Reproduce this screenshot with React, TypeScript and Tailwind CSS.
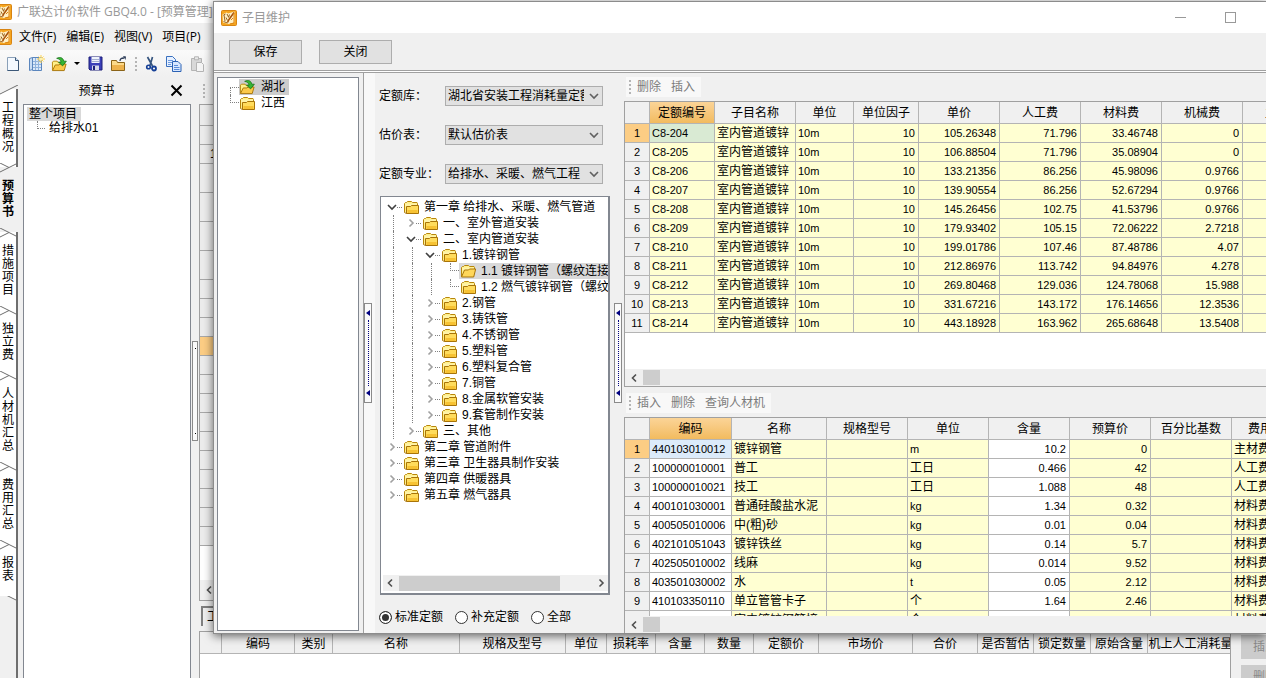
import React, { useState } from "react";
import clsx from "clsx";

type Column = { title: string; width: number; align?: "right"; white?: boolean };

type TreeNode = { depth: number; label: string; state: "open" | "closed" | "leaf" };

const quotaColumns: Column[] = [
  { title: "定额编号", width: 65 },
  { title: "子目名称", width: 81 },
  { title: "单位", width: 58 },
  { title: "单位因子", width: 65, align: "right" },
  { title: "单价", width: 81, align: "right" },
  { title: "人工费", width: 81, align: "right" },
  { title: "材料费", width: 81, align: "right" },
  { title: "机械费", width: 81, align: "right" },
  { title: "主材费", width: 81, align: "right" },
];

const quotaRows = [
  ["C8-204", "105.26348", "71.796", "33.46748", "0"],
  ["C8-205", "106.88504", "71.796", "35.08904", "0"],
  ["C8-206", "133.21356", "86.256", "45.98096", "0.9766"],
  ["C8-207", "139.90554", "86.256", "52.67294", "0.9766"],
  ["C8-208", "145.26456", "102.75", "41.53796", "0.9766"],
  ["C8-209", "179.93402", "105.15", "72.06222", "2.7218"],
  ["C8-210", "199.01786", "107.46", "87.48786", "4.07"],
  ["C8-211", "212.86976", "113.742", "94.84976", "4.278"],
  ["C8-212", "269.80468", "129.036", "124.78068", "15.988"],
  ["C8-213", "331.67216", "143.172", "176.14656", "12.3536"],
  ["C8-214", "443.18928", "163.962", "265.68648", "13.5408"],
].map(([code, ...prices]) => [code, "室内管道镀锌", "10m", "10", ...prices, ""]);

const materialColumns: Column[] = [
  { title: "编码", width: 82, white: true },
  { title: "名称", width: 95 },
  { title: "规格型号", width: 81 },
  { title: "单位", width: 81 },
  { title: "含量", width: 81, align: "right", white: true },
  { title: "预算价", width: 81, align: "right" },
  { title: "百分比基数", width: 81, align: "right" },
  { title: "费用类别", width: 81 },
];

const materialRows = [
  ["440103010012", "镀锌钢管", "", "m", "10.2", "0", "", "主材费"],
  ["100000010001", "普工", "", "工日", "0.466", "42", "", "人工费"],
  ["100000010021", "技工", "", "工日", "1.088", "48", "", "人工费"],
  ["400101030001", "普通硅酸盐水泥", "", "kg", "1.34", "0.32", "", "材料费"],
  ["400505010006", "中(粗)砂", "", "kg", "0.01", "0.04", "", "材料费"],
  ["402101051043", "镀锌铁丝", "", "kg", "0.14", "5.7", "", "材料费"],
  ["402505010002", "线麻", "", "kg", "0.014", "9.52", "", "材料费"],
  ["403501030002", "水", "", "t", "0.05", "2.12", "", "材料费"],
  ["410103350110", "单立管管卡子", "", "个", "1.64", "2.46", "", "材料费"],
  ["", "室内镀锌钢管接", "", "个", "", "", "", "材料费"],
];

const chapters: TreeNode[] = [
  { depth: 0, label: "第一章 给排水、采暖、燃气管道", state: "open" },
  { depth: 1, label: "一、室外管道安装", state: "closed" },
  { depth: 1, label: "二、室内管道安装", state: "open" },
  { depth: 2, label: "1.镀锌钢管", state: "open" },
  { depth: 3, label: "1.1 镀锌钢管（螺纹连接）", state: "leaf" },
  { depth: 3, label: "1.2 燃气镀锌钢管（螺纹连接）", state: "leaf" },
  { depth: 2, label: "2.钢管", state: "closed" },
  { depth: 2, label: "3.铸铁管", state: "closed" },
  { depth: 2, label: "4.不锈钢管", state: "closed" },
  { depth: 2, label: "5.塑料管", state: "closed" },
  { depth: 2, label: "6.塑料复合管", state: "closed" },
  { depth: 2, label: "7.铜管", state: "closed" },
  { depth: 2, label: "8.金属软管安装", state: "closed" },
  { depth: 2, label: "9.套管制作安装", state: "closed" },
  { depth: 1, label: "三、其他", state: "closed" },
  { depth: 0, label: "第二章 管道附件", state: "closed" },
  { depth: 0, label: "第三章 卫生器具制作安装", state: "closed" },
  { depth: 0, label: "第四章 供暖器具", state: "closed" },
  { depth: 0, label: "第五章 燃气器具", state: "closed" },
];

const sideTabs = ["工程概况", "预算书", "措施项目", "独立费", "人材机汇总", "费用汇总", "报表"];

const detailColumns = [
  { title: "", width: 22 },
  { title: "编码", width: 73 },
  { title: "类别", width: 38 },
  { title: "名称", width: 127 },
  { title: "规格及型号", width: 106 },
  { title: "单位", width: 41 },
  { title: "损耗率", width: 49 },
  { title: "含量", width: 49 },
  { title: "数量", width: 49 },
  { title: "定额价", width: 65 },
  { title: "市场价", width: 94 },
  { title: "合价", width: 65 },
  { title: "是否暂估", width: 56 },
  { title: "锁定数量", width: 57 },
  { title: "原始含量", width: 57 },
  { title: "机上人工消耗量", width: 86 },
];

const gridRowHeights = [21, 19, 19, 29, 29, 29, 29, 19, 19, 19, 19, 19, 19, 19, 19, 19, 19, 19, 19, 19, 19];

const AppIcon = () => (
  <svg width="16" height="16" viewBox="0 0 16 16" className="shrink-0">
    <rect x="0.5" y="0.5" width="15" height="15" rx="1" fill="#f5a51f" stroke="#d88412" />
    <path d="M1.500 4.500l4-2 1.500 1 6.500-2v11l-6 1.500-5.500-1.500z" fill="#fff0c4" />
    <path d="M2.500 5l2-1M3 5l1 6M2.500 11.500l4 1.500M6 4l1.500 3M5 7.500l1.500 3M8.500 4.500l-1 3" stroke="#8f5410" strokeWidth="0.9" fill="none" />
    <path d="M13 2.500L8 9.500l-1.500 3" stroke="#a8520a" strokeWidth="1.500" fill="none" />
    <path d="M13 3v10l-4 1M10 10l2-2" stroke="#dd8413" fill="none" />
  </svg>
);

const Folder = ({ open = false }: { open?: boolean }) => (
  <svg width="16" height="16" viewBox="0 0 16 16" className="shrink-0">
    <path d="M1.500 13.500v-9l1-1h1l1-1h4l1 1h4.500l.5 1v2" fill="#fff08a" stroke="#b8860b" />
    <path d="M2 4.500h12v3H2z" fill="#fff4a8" />
    {open ? (
      <path d="M1.500 14L4.500 7h4l1-1h6.200l-2 8z" fill="#ffd75a" stroke="#a87408" />
    ) : (
      <>
        <path d="M3.500 14.500v-7h4l1-1h7v8z" fill="#ffdc5c" stroke="#a87408" />
        <path d="M4.500 11h10v3h-10z" fill="#f7c233" />
        <path d="M1.500 13.500l2 1" stroke="#a87408" />
      </>
    )}
  </svg>
);

const OpenFolder = () => (
  <svg width="17" height="16" viewBox="0 0 18 17" className="shrink-0">
    <path d="M1.500 15V6.500l1-1h4l1 1.500h6v3" fill="#fff08a" stroke="#b8860b" />
    <path d="M1.500 15.500l3-6h4l1-1h6.500l-2 7z" fill="#fbc94a" stroke="#a87408" />
    <path d="M6 2.500c4-2 7-.5 7.500 3h2.800L12.300 10.500 8 6.500h2.700C10 4 8.500 3 6 2.500z" fill="#35b535" stroke="#167016" strokeWidth="0.8" />
  </svg>
);

const NewPage = () => (
  <svg width="14" height="16" viewBox="0 0 14 16">
    <path d="M1.500 1.500h8l3 3v10h-11z" fill="#f4f9ff" stroke="#8aa0b8" />
    <path d="M12.500 4.500v10h-11" stroke="#3c5878" fill="none" />
    <path d="M9.500 1.500v3h3" fill="#cfe0f2" stroke="#3c5878" />
  </svg>
);

const NewSheet = () => (
  <svg width="17" height="17" viewBox="0 0 17 17">
    <path d="M1.500 3.500l3-1v12l-3 1z" fill="#c9ddf5" stroke="#5b86bd" />
    <path d="M4.500 2.500h9v13h-9z" fill="#dbe8f8" stroke="#5b86bd" />
    <path d="M7.500 3v12M10.500 3v12M5 6.500h8M5 9.500h8M5 12.500h8" stroke="#8fb2dd" />
    <path d="M13 0v8M9 4h8M10.500 1.500l5 5M15.500 1.500l-5 5" stroke="#ffd34d" />
    <circle cx="13" cy="4" r="1.500" fill="#fff3b0" />
  </svg>
);

const SaveIcon = () => (
  <svg width="15" height="15" viewBox="0 0 15 15">
    <path d="M1 1h13v13H2l-1-1z" fill="#3a3fb8" stroke="#1c1f78" />
    <path d="M3.500 1h8v6h-8z" fill="#eef2fb" />
    <path d="M4 3.500h7M4 5.500h7" stroke="#a4aed0" />
    <path d="M4 9.500h7V14H4z" fill="#d5d9ea" />
    <path d="M5 10h2v4H5z" fill="#1c1f78" />
  </svg>
);

const CloseProject = () => (
  <svg width="17" height="16" viewBox="0 0 17 16">
    <path d="M1.500 14.500v-10h5l1 2h7v8z" fill="#fbd98a" stroke="#8a6318" />
    <path d="M2 9h12v5H2z" fill="#edb24d" />
    <path d="M10 5c0-2 1-3 4-3" stroke="#2c3c58" fill="none" strokeWidth="1.300" />
    <path d="M13 0l3 .5-.5 3.500z" fill="#2c3c58" />
  </svg>
);

const CutIcon = () => (
  <svg width="13" height="16" viewBox="0 0 13 16">
    <path d="M2.500 1l5 9M7.500 1L5 9.500" stroke="#36557f" strokeWidth="1.700" />
    <circle cx="3.500" cy="11" r="1.800" fill="none" stroke="#153f96" strokeWidth="1.600" />
    <circle cx="9" cy="12.500" r="2" fill="none" stroke="#153f96" strokeWidth="1.800" />
  </svg>
);

const CopyIcon = () => (
  <svg width="16" height="16" viewBox="0 0 16 16">
    <path d="M.5.5h6l3 3v7h-9z" fill="#e6f0ff" stroke="#3970bf" />
    <path d="M2 4.500h5M2 6.500h5M2 8.500h3" stroke="#6d9be0" />
    <path d="M6.500 5.500h5.500l3 3v7h-8.500z" fill="#d7e7ff" stroke="#2c62b4" />
    <path d="M8 9.500h4M8 11.500h5.500M8 13.500h5.500" stroke="#5a8cd8" />
  </svg>
);

const PasteIcon = () => (
  <svg width="15" height="16" viewBox="0 0 15 16">
    <path d="M1.500 2.500h10v12h-10z" fill="#d8d8d8" stroke="#b4b4b4" />
    <path d="M4.500.8h4v3h-4z" fill="#e8e8e8" stroke="#b4b4b4" />
    <path d="M6.500 6.500h5l2 2v7h-7z" fill="#f4f4f4" stroke="#b4b4b4" />
  </svg>
);

const Chevron = ({ dir, className }: { dir: "left" | "right" | "down"; className?: string }) => (
  <svg width="10" height="10" viewBox="0 0 10 10" fill="none" stroke="currentColor" strokeWidth="1.600" className={clsx("shrink-0", className)}>
    {dir === "left" && <path d="M7 1.500L3.500 5 7 8.500" />}
    {dir === "right" && <path d="M3.500 1.500L7 5 3.500 8.500" />}
    {dir === "down" && <path d="M1 3l4 4 4-4" />}
  </svg>
);

const Grip = () => <span className="h-3.5 w-0 shrink-0 border-l-2 border-dotted border-[#b4b4b4]" />;

const SplitHandle = () => (
  <div className="flex h-[100px] w-2 flex-col items-center justify-between border border-[#8a8a8a] bg-[#fafafa] py-1.5">
    <span className="border-y-[3px] border-r-4 border-y-transparent border-r-[#000080]" />
    <span className="my-1 w-0 flex-1 border-l border-dotted border-[#000080]" />
    <span className="border-y-[3px] border-r-4 border-y-transparent border-r-[#000080]" />
  </div>
);

const Guide = () => <span className="ml-2.5 w-[9px] shrink-0 self-stretch border-l border-dotted border-[#808080]" />;

const Elbow = () => (
  <span className="ml-2.5 flex w-[9px] shrink-0 flex-col self-stretch">
    <span className="h-2 border-b border-l border-dotted border-[#808080]" />
  </span>
);

const GridTable = ({ columns, rows }: { columns: Column[]; rows: string[][] }) => (
  <table className="w-px table-fixed border-separate border-spacing-0">
    <colgroup>
      <col className="w-[25px]" />
      {columns.map((c) => (
        <col key={c.title} style={{ width: c.width }} />
      ))}
    </colgroup>
    <thead>
      <tr>
        <th className="border-r border-b border-[#b4b4b4] bg-[#f0f0f0]" />
        {columns.map((c, i) => (
          <th
            key={c.title}
            className={clsx(
              "h-[22px] overflow-hidden border-r border-b border-[#b4b4b4] p-0 pt-0.5 font-normal leading-[19px] whitespace-nowrap",
              i === 0 ? "bg-linear-to-b from-[#fbd497] to-[#f2bb5e]" : "bg-[#f0f0f0]"
            )}
          >
            {c.title}
          </th>
        ))}
      </tr>
    </thead>
    <tbody>
      {rows.map((row, r) => (
        <tr key={r}>
          <th
            className={clsx(
              "h-[19px] border-r border-b border-[#b4b4b4] p-0 text-[11px] font-normal leading-[18px]",
              r === 0 ? "bg-[#fccd84]" : "bg-[#f0f0f0]"
            )}
          >
            {row[0] && r + 1}
          </th>
          {row.map((cell, i) => (
            <td
              key={i}
              className={clsx(
                "h-[19px] overflow-hidden border-r border-b border-[#b4b4b4] py-0 pr-[3px] pl-0.5 leading-[18px] whitespace-nowrap",
                columns[i].align === "right" && "text-right",
                /^[\w.-]*$/.test(cell) ? "text-[11px]" : "text-xs",
                r === 0 && i === 0
                  ? columns[i].white
                    ? "bg-[#dcebfa]"
                    : "bg-[#d9ead3]"
                  : columns[i].white
                  ? "bg-white"
                  : "bg-[#ffffd2]"
              )}
            >
              {cell}
            </td>
          ))}
        </tr>
      ))}
    </tbody>
  </table>
);

const SmallScroll = () => (
  <div className="flex h-[17px] shrink-0 items-center bg-[#f0f0f0] pl-1 text-[#505050]">
    <Chevron dir="left" />
    <span className="ml-1 h-[15px] w-[17px] bg-[#cdcdcd]" />
  </div>
);

const PanelToolbar = ({ actions }: { actions: string[] }) => (
  <div className="flex h-5 w-fit items-center gap-2.5 bg-[#f8f8f8] pr-1.5 pl-[3px] text-[#7c7c7c]">
    <Grip />
    {actions.map((a, i) => (
      <button key={a} className={clsx("leading-5", i === 0 && "-ml-1")}>
        {a}
      </button>
    ))}
  </div>
);

const SelectRow = ({ id, label, options }: { id: string; label: string; options: string[] }) => (
  <div className="flex h-5 items-center">
    <label htmlFor={id} className="w-[66px]">
      {label}
    </label>
    <div className="relative w-[158px]">
      <select id={id} className="block h-5 w-full appearance-none border border-[#adadad] bg-[#e1e1e1] pr-[18px] pl-0.5 leading-[18px]">
        {options.map((o) => (
          <option key={o}>{o}</option>
        ))}
      </select>
      <Chevron dir="down" className="pointer-events-none absolute top-[5px] right-1 text-[#606060]" />
    </div>
  </div>
);

const MaintenanceDialog = () => {
  const [kind, setKind] = useState("标准定额");
  const [selected, setSelected] = useState("1.1 镀锌钢管（螺纹连接）");

  return (
    <section className="absolute top-px right-0 bottom-11 left-[213px] flex flex-col border border-r-0 border-[#8c8c8c] bg-[#f0f0f0] shadow-[0_2px_9px_rgba(0,0,0,0.6)]">
      <header className="flex h-[31px] shrink-0 items-center gap-[5px] bg-white pr-[30px] pl-[7px] text-[#999999]">
        <AppIcon />
        <h1 className="flex-1">子目维护</h1>
        <button aria-label="最小化" className="mr-[34px] h-px w-[11px] bg-[#999999]" />
        <button aria-label="最大化" className="size-[11px] border border-[#999999]" />
      </header>
      <div className="flex h-[37px] shrink-0 items-center gap-[17px] pl-[15px]">
        <button className="h-6 w-[73px] border border-[#adadad] bg-[#e1e1e1]">保存</button>
        <button className="h-6 w-[73px] border border-[#adadad] bg-[#e1e1e1]">关闭</button>
      </div>
      <div className="h-[3px] shrink-0 border-y border-[#a0a0a0] bg-white" />

      <div className="flex min-h-0 flex-1">
        <ul className="mt-1 mb-0.5 ml-[3px] w-[142px] shrink-0 border border-[#828790] bg-white pt-px pl-3">
          <li className="flex h-4 items-center">
            <span className="flex w-[9px] shrink-0 self-stretch">
              <span className="mt-2 flex-1 border-t border-l border-dotted border-[#808080]" />
            </span>
            <span className="flex h-4 items-center gap-[5px] bg-[#cccccc] pr-1">
              <OpenFolder />
              湖北
            </span>
          </li>
          <li className="flex h-4 items-center">
            <span className="flex w-[9px] shrink-0 self-stretch">
              <span className="mb-2 flex-1 border-b border-l border-dotted border-[#808080]" />
            </span>
            <span className="flex h-4 items-center gap-1.5">
              <Folder />
              江西
            </span>
          </li>
        </ul>
        <div className="ml-1 flex w-3 shrink-0 items-center border-l border-[#a0a0a0] bg-[#f8f8f8]">
          <SplitHandle />
        </div>

        <div className="flex w-[239px] shrink-0 flex-col pt-[13px] pr-1 pl-1">
          <div className="flex flex-col gap-[19px]">
            <SelectRow id="library" label="定额库：" options={["湖北省安装工程消耗量定额"]} />
            <SelectRow id="valuation" label="估价表：" options={["默认估价表"]} />
            <SelectRow id="major" label="定额专业：" options={["给排水、采暖、燃气工程"]} />
          </div>
          <div className="mt-3 ml-px flex min-h-0 flex-1 flex-col border border-r-2 border-b-2 border-[#828790] bg-white py-0.5 pl-0.5">
            <ul className="min-h-0 flex-1 overflow-hidden">
              {chapters.map((node) => (
                <li key={node.label} className="flex h-4 items-center whitespace-nowrap">
                  {Array.from({ length: node.depth }, (_, i) => (
                    <Guide key={i} />
                  ))}
                  {node.state === "leaf" ? (
                    <Elbow />
                  ) : (
                    <span className="flex w-[19px] shrink-0 items-center pl-1">
                      <Chevron
                        dir={node.state === "open" ? "down" : "right"}
                        className={node.state === "open" ? "text-[#404040]" : "text-[#a0a0a0]"}
                      />
                      <span className="w-[5px] border-t border-dotted border-[#808080]" />
                    </span>
                  )}
                  <button
                    onClick={() => setSelected(node.label)}
                    className={clsx(
                      "flex h-4 min-w-0 flex-1 items-center gap-[5px] overflow-hidden pl-px text-left leading-4",
                      selected === node.label && "bg-[#d9d9d9]"
                    )}
                  >
                    <Folder open={selected === node.label} />
                    <span className="min-w-0 overflow-hidden">{node.label}</span>
                  </button>
                </li>
              ))}
            </ul>
            <div className="flex h-4 shrink-0 items-center gap-1 bg-[#f0f0f0] px-0.5 text-[#505050]">
              <Chevron dir="left" />
              <span className="flex-1">
                <span className="block h-[15px] w-5/6 bg-[#cdcdcd]" />
              </span>
              <Chevron dir="right" />
            </div>
          </div>
          <div className="flex h-[38px] shrink-0 items-center gap-3 pt-1.5">
            {["标准定额", "补充定额", "全部"].map((k) => (
              <label key={k} className="flex items-center gap-[3px]">
                <input
                  type="radio"
                  name="kind"
                  checked={kind === k}
                  onChange={() => setKind(k)}
                  className="size-[13px] appearance-none rounded-full border border-[#333333] bg-white checked:bg-[#333333] checked:shadow-[inset_0_0_0_2px_white]"
                />
                {k}
              </label>
            ))}
          </div>
        </div>
        <div className="flex w-2.5 shrink-0 items-center">
          <SplitHandle />
        </div>

        <div className="flex min-w-0 flex-1 flex-col pt-1">
          <div className="pl-0.5">
            <PanelToolbar actions={["删除", "插入"]} />
          </div>
          <div className="mt-1 flex h-[286px] shrink-0 flex-col overflow-hidden border border-r-0 border-[#a0a0a0] bg-white">
            <div className="flex-1 overflow-hidden">
              <GridTable columns={quotaColumns} rows={quotaRows} />
            </div>
            <SmallScroll />
          </div>
          <div className="mt-1.5 pl-0.5">
            <PanelToolbar actions={["插入", "删除", "查询人材机"]} />
          </div>
          <div className="mt-1 flex min-h-0 flex-1 flex-col overflow-hidden border-t border-l border-[#a0a0a0] bg-white">
            <div className="min-h-0 flex-1 overflow-hidden">
              <GridTable columns={materialColumns} rows={materialRows} />
            </div>
            <SmallScroll />
          </div>
        </div>
      </div>
    </section>
  );
};

const SideTabs = () => (
  <nav className="flex w-[18px] shrink-0 flex-col bg-[#f0f0f0] pt-3">
    {sideTabs.map((tab, i) => (
      <button
        key={tab}
        className={clsx(
          "relative flex w-[18px] flex-col items-center py-[13px] leading-[13px]",
          tab === "预算书" ? "pr-0.5 font-bold" : "border-r-2 border-[#6e6e6e] bg-white"
        )}
      >
        <svg width="18" height="10" viewBox="0 0 18 10" className="absolute -top-1 left-0" fill="none" stroke="#6e6e6e">
          {i === 0 && <path d="M0 0h18L0 8z" fill="#f0f0f0" stroke="none" />}
          {i < 2 ? <path d="M0 9L18 0" /> : <path d="M0 0l18 9" />}
          {i === 1 && <path d="M0 0l9 4.500" />}
          {i > 1 && <path d="M0 9l9-4.500" />}
        </svg>
        {tab.split("").map((ch, n) => (
          <span key={n}>{ch}</span>
        ))}
      </button>
    ))}
    <svg width="18" height="10" viewBox="0 0 18 10" className="-mt-1 shrink-0" fill="#ffffff" stroke="#6e6e6e">
      <path d="M0 0l18 9V0z" stroke="none" />
      <path d="M0 0l18 9" />
      <path d="M17 0v10" strokeWidth="2" />
    </svg>
    <span className="flex-1 border-r-2 border-[#6e6e6e]" />
  </nav>
);

const App: React.FC = () => {
  return (
    <div className="relative flex h-screen flex-col overflow-hidden bg-[#f0f0f0] font-['Liberation_Sans','Noto_Sans_CJK_SC',sans-serif] text-xs text-black">
      <header className="flex h-[23px] shrink-0 items-center gap-[5px] bg-white font-['Open_Sans','Noto_Sans_CJK_SC',sans-serif] text-[#999999]">
        <span className="-ml-1">
          <AppIcon />
        </span>
        <span>广联达计价软件 GBQ4.0 - [预算管理]</span>
      </header>
      <nav className="flex h-[27px] shrink-0 items-center font-['Open_Sans','Noto_Sans_CJK_SC',sans-serif]">
        <span className="-ml-1 pr-[7px]">
          <AppIcon />
        </span>
        <div className="flex gap-2.5">
          {["文件(F)", "编辑(E)", "视图(V)", "项目(P)"].map((m) => (
            <button key={m}>{m}</button>
          ))}
        </div>
      </nav>
      <div className="flex h-[27px] shrink-0 items-center bg-linear-to-b from-[#fafafa] to-[#f0f0f0] pl-1.5">
        <button aria-label="新建" className="mr-2"><NewPage /></button>
        <button aria-label="新建表" className="mr-1.5"><NewSheet /></button>
        <button aria-label="打开" className="mr-1.5"><OpenFolder /></button>
        <span className="mr-2 border-x-[3px] border-t-[3px] border-x-transparent border-t-black" />
        <button aria-label="保存" className="mr-[7px]"><SaveIcon /></button>
        <button aria-label="关闭项目" className="mr-2"><CloseProject /></button>
        <Grip />
        <button aria-label="剪切" className="mr-2 ml-2"><CutIcon /></button>
        <button aria-label="复制" className="mr-2"><CopyIcon /></button>
        <button aria-label="粘贴"><PasteIcon /></button>
      </div>

      <div className="flex min-h-0 flex-1">
        <SideTabs />
        <aside className="ml-[5px] flex w-[168px] shrink-0 flex-col">
          <div className="flex h-[27px] items-center pr-2">
            <h2 className="flex-1 text-center">预算书</h2>
            <button aria-label="关闭">
              <svg width="13" height="13" viewBox="0 0 13 13" stroke="#000000" strokeWidth="2">
                <path d="M1.500 1.500l10 10M11.500 1.500l-10 10" />
              </svg>
            </button>
          </div>
          <div className="flex-1 border border-b-0 border-[#828790] bg-white pt-0.5 pl-[3px] leading-[14px]">
            <div className="w-fit bg-[#d9d9d9] pr-1 pl-0.5">整个项目</div>
            <div className="flex pl-2.5">
              <span className="mr-1 h-2 w-2 border-b border-l border-dotted border-[#808080]" />
              给排水01
            </div>
          </div>
        </aside>
        <div className="flex w-2 shrink-0 items-start justify-center pt-[264px]">
          <div className="flex h-[100px] w-1.5 flex-col items-center justify-between border border-[#8a8a8a] bg-[#fafafa] py-1.5">
            <span className="size-px bg-black" />
            <span className="size-px bg-black" />
          </div>
        </div>

        <div className="flex min-w-0 flex-1 flex-col">
          <div className="flex h-[27px] shrink-0 items-center pl-1">
            <Grip />
          </div>
          <div className="flex min-h-0 flex-1 flex-col border border-[#a0a0a0] bg-white">
            {gridRowHeights.map((height, i) => (
              <div
                key={i}
                style={{ height }}
                className={clsx(
                  "shrink-0 border-b border-[#a8a8a8] pl-2.5 leading-[18px]",
                  i === 10 ? "bg-[#fccd84]" : "bg-[#ececec]"
                )}
              >
                {i === 2 && "1"}
              </div>
            ))}
            <div className="flex-1" />
            <div className="flex h-5 shrink-0 items-center bg-[#f0f0f0] pl-1 text-[#505050]">
              <Chevron dir="left" />
            </div>
          </div>
          <div className="flex h-[30px] shrink-0 items-center pl-0.5">
            <button className="h-5 border-t-2 border-l-2 border-[#808080] pl-1">工料机显示</button>
          </div>
          <div className="flex h-[47px] shrink-0">
            <div className="min-w-0 flex-1 overflow-hidden border-x border-t border-[#a0a0a0] bg-white">
              <table className="w-px table-fixed border-separate border-spacing-0">
                <colgroup>
                  {detailColumns.map((c) => (
                    <col key={c.title} style={{ width: c.width }} />
                  ))}
                </colgroup>
                <thead>
                  <tr>
                    {detailColumns.map((c) => (
                      <th
                        key={c.title}
                        className="h-[22px] overflow-hidden border-r border-b border-[#b4b4b4] bg-[#f0f0f0] p-0 pt-1 font-normal leading-[17px] whitespace-nowrap"
                      >
                        {c.title}
                      </th>
                    ))}
                  </tr>
                </thead>
              </table>
            </div>
            <div className="ml-2.5 flex w-[25px] flex-col gap-1.5 overflow-hidden pt-1 text-[#8a8a8a]">
              {["插入", "删除"].map((a) => (
                <button key={a} className="h-6 shrink-0 bg-[#cccccc] pl-3 text-left whitespace-nowrap">
                  {a}
                </button>
              ))}
            </div>
          </div>
        </div>
      </div>
      <MaintenanceDialog />
    </div>
  );
};

export default App;
